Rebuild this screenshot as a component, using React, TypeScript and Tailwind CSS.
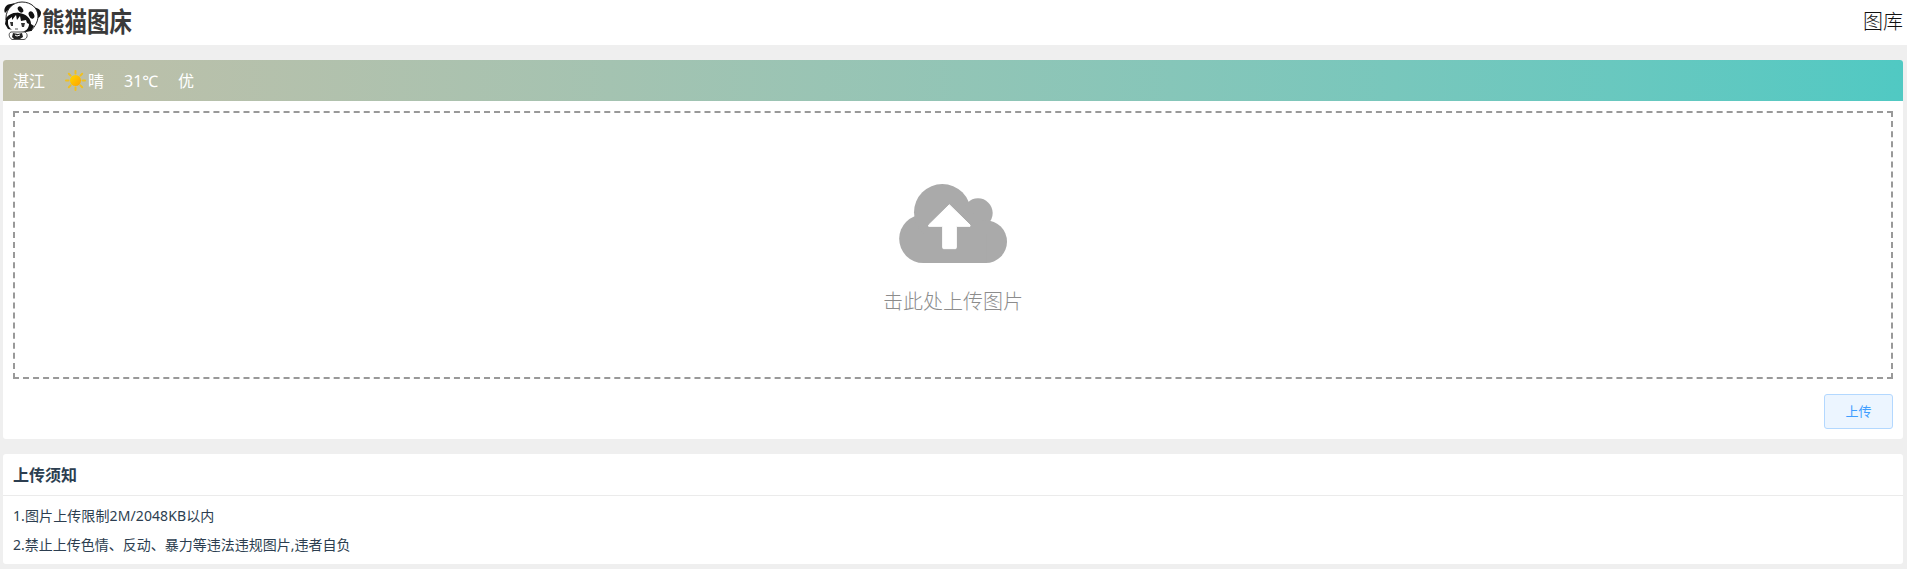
function PandaLogo() {
  return (
    <svg className="block h-[42px] w-[39px] shrink-0" viewBox="0 0 39 42">
      <path d="M3 13C1 9 4 4 9 4l4-1-8 8z" fill="#111" />
      <path d="M31 8c4-1 8 2 8 5 0 3-2 5-4 5z" fill="#111" />
      <path d="M4 18C4 9 11 2 20 2c9 0 16 6 16 14 0 6-3 10-7 15L27 21 16 13 4 20z" fill="#fff" stroke="#222" strokeWidth="1" />
      <ellipse cx="18.500" cy="9.500" rx="2.300" ry="3.500" fill="#111" transform="rotate(-35 18.5 9.5)" />
      <ellipse cx="29.500" cy="15" rx="2.600" ry="3.800" fill="#111" transform="rotate(-25 29.5 15)" />
      <path d="M4 18c3-4 8-6 13-5 7 1 12 5 12 11l3 2-3 5-5 1-18-3-3-5z" fill="#111" />
      <path d="M6 20l4-3v3l4-5 1 5 3-4 1 5 5-1 1 3 2 1c0 5-4 8-9 8-7 0-12-4-12-9z" fill="#fff" />
      <path d="M8 22h3v4H9zM19 23h4l-1 4h-2z" fill="#333" />
      <path d="M13 29h3" stroke="#555" strokeWidth="1" />
      <path d="M9 32c-3 1-2 6 1 7.500h12c4-1 4-6 1-7.500z" fill="#fff" stroke="#222" strokeWidth="0.800" />
      <path d="M11 33l5 1 4-1 1 4-3 2h-6l-2-2z" fill="#222" />
      <path d="M13 35l2 1 3-1" stroke="#fff" fill="none" />
    </svg>
  );
}

function Sun() {
  return (
    <svg className="mr-0.5 block size-[21px]" viewBox="0 0 21 21">
      <defs>
        <linearGradient id="sun" x1="0" y1="0" x2="1" y2="1">
          <stop offset="0" stopColor="#ffd800" />
          <stop offset="1" stopColor="#ffa200" />
        </linearGradient>
      </defs>
      <path
        d="M10.500 1v2.500M10.500 17.500V20M1 10.500h2.500M17.500 10.500H20M3.800 3.800l1.800 1.800M15.400 15.400l1.800 1.800M3.800 17.200l1.800-1.800M15.400 5.600l1.800-1.800"
        stroke="#f0c020"
        strokeWidth="2"
        strokeLinecap="round"
      />
      <circle cx="10.500" cy="10.500" r="5.500" fill="url(#sun)" />
    </svg>
  );
}

function CloudUpload() {
  return (
    <svg className="block h-[79px] w-[108px]" viewBox="117 72 324 237" fill="#aaa">
      <circle cx="190" cy="236.500" r="72.500" />
      <circle cx="247" cy="157" r="85" />
      <circle cx="354" cy="159" r="44" />
      <circle cx="377" cy="245" r="64" />
      <path d="M190 160h150l40 60v89H190z" />
      <path
        d="M268 134l62 61v4h-41v64q0 3-3 3h-35q-3 0-3-3v-64h-42v-4z"
        fill="#fff"
        stroke="#fff"
        strokeWidth="3"
        strokeLinejoin="round"
      />
    </svg>
  );
}

export default function App() {
  return (
    <div className="h-[569px] overflow-hidden bg-[#efefef] font-['Noto_Sans','Noto_Sans_CJK_SC',sans-serif] text-[#2c3e50]">
      <header className="flex h-[45px] items-start justify-between bg-white pr-1 pl-0.5">
        <div className="flex">
          <PandaLogo />
          <span className="ml-px origin-top scale-y-[1.2] text-[22.500px] leading-[38px] font-bold text-[#3a3a3a]">熊猫图床</span>
        </div>
        <a className="text-xl leading-[43px] font-light text-[#111]">图库</a>
      </header>
      <main className="mt-[15px] mr-1 ml-[3px] flex flex-col gap-[15px]">
        <section className="h-[379px] overflow-hidden rounded-[3px] bg-white">
          <div className="flex h-[41px] items-center bg-linear-to-r from-[#c0bfa8] to-[#50c9c3] px-2.5 text-base leading-none text-white">
            <span className="w-[52px]">湛江</span>
            <Sun />
            <span className="w-9">晴</span>
            <span className="w-[54px]">31℃</span>
            <span>优</span>
          </div>
          <div className="mx-2.5 mt-2.5 flex h-[268px] flex-col items-center border-2 border-dashed border-[#999] pt-[71px] text-[#8c8c8c]">
            <CloudUpload />
            <p className="mt-[23px] text-xl leading-[31px] font-light">击此处上传图片</p>
          </div>
          <div className="mt-[15px] mr-2.5 flex justify-end">
            <button className="h-[35px] w-[69px] rounded-[3px] border border-[#b3d8ff] bg-[#ecf5ff] text-[13px] text-[#409eff]">上传</button>
          </div>
        </section>
        <section className="h-[110px] rounded-[3px] bg-white">
          <h2 className="h-[42px] border-b border-[#ebebeb] px-2.5 text-base leading-[42px] font-bold">上传须知</h2>
          <div className="px-2.5 pt-[5px] text-sm leading-[29px]">
            <p className="tracking-[0.1px]">1.图片上传限制2M/2048KB以内</p>
            <p>2.禁止上传色情、反动、暴力等违法违规图片,违者自负</p>
          </div>
        </section>
      </main>
    </div>
  );
}
